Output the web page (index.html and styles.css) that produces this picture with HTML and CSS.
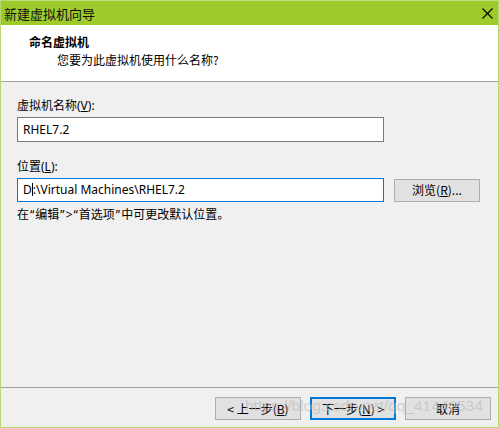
FILE: index.html
```html
<!DOCTYPE html>
<html>
<head>
<meta charset="utf-8">
<link rel="stylesheet" href="styles.css">
</head>
<body>
<div class="window">
  <div class="titlebar">
    <span class="title">新建虚拟机向导</span>
    <svg class="close" width="11" height="11" viewBox="0 0 11 11"><path d="M0.5 0.5 L10.5 10.5 M10.5 0.5 L0.5 10.5" stroke="#000" stroke-width="1.1" fill="none"/></svg>
  </div>
  <div class="header">
    <div class="h-title">命名虚拟机</div>
    <div class="h-sub">您要为此虚拟机使用什么名称?</div>
  </div>
  <div class="content">
    <div class="label">虚拟机名称(<u>V</u>):</div>
    <div class="row">
      <div class="input">RHEL7.2</div>
    </div>
    <div class="label label2">位置(<u>L</u>):</div>
    <div class="row">
      <div class="input focused">D<span class="caret"></span>:\Virtual Machines\RHEL7.2</div>
      <div class="btn browse">浏览(<u>R</u>)...</div>
    </div>
    <div class="note">在<span class="q">“</span>编辑<span class="q">”</span>&gt;<span class="q">“</span>首选项<span class="q">”</span>中可更改默认位置。</div>
  </div>
  <div class="footer">
    <div class="btn">&lt; 上一步(<u>B</u>)</div>
    <div class="btn primary">下一步(<u>N</u>) &gt;</div>
    <div class="btn">取消</div>
    <div class="watermark">https://blog.csdn.net/qq_41440534</div>
  </div>
</div>
</body>
</html>
```
FILE: styles.css
```css
* { box-sizing: border-box; }
html, body { margin: 0; padding: 0; }
body {
  width: 499px;
  height: 428px;
  font-family: "Noto Sans", "Noto Sans CJK SC", sans-serif;
  font-size: 12px;
  color: #000;
  overflow: hidden;
}
u { text-decoration: underline; text-underline-offset: 1px; }
.window {
  width: 499px;
  height: 428px;
  border: 1px solid #b7d873;
  border-top-color: #c0dd80;
  background: #f0f0f0;
  display: flex;
  flex-direction: column;
}
.titlebar {
  height: 24px;
  background: #9ecb2b;
  display: flex;
  align-items: center;
  justify-content: space-between;
  padding: 0 5px 0 3px;
  flex: none;
}
.title {
  font-family: "Noto Sans CJK SC", sans-serif;
  font-size: 13px;
  color: #111;
}
.header {
  height: 57px;
  background: #fff;
  border-bottom: 1px solid #a0a0a0;
  padding: 9px 0 0 28px;
  flex: none;
}
.h-title {
  font-family: "Noto Sans CJK SC", sans-serif;
  font-weight: bold;
  font-size: 12px;
  line-height: 16px;
}
.h-sub {
  font-family: "Noto Sans CJK SC", sans-serif;
  font-size: 12px;
  line-height: 16px;
  margin: 2px 0 0 28px;
}
.content {
  flex: 1;
  padding: 16px 0 0 16px;
}
.label {
  font-family: "Noto Sans", "Noto Sans CJK SC", sans-serif;
  line-height: 16px;
  height: 16px;
}
.label2 { margin-top: 17px; }
.row {
  display: flex;
  align-items: center;
  margin-top: 3px;
}
.input {
  width: 367px;
  height: 25px;
  background: #fff;
  border: 1px solid #7a7a7a;
  padding: 0 5px;
  line-height: 23px;
  font-family: "Noto Sans", sans-serif;
  font-size: 12px;
  white-space: nowrap;
}
.input.focused { border-color: #0078d7; height: 24px; line-height: 22px; }
.caret {
  display: inline-block;
  width: 1px;
  height: 13px;
  background: #000;
  vertical-align: -2px;
}
.btn {
  width: 86px;
  height: 23px;
  border: 1px solid #adadad;
  background: #e1e1e1;
  display: flex;
  align-items: center;
  justify-content: center;
  font-family: "Noto Sans CJK SC", sans-serif;
  font-size: 12px;
  line-height: 1;
}
.browse { margin-left: 10px; }
.note {
  font-family: "Noto Sans", "Noto Sans CJK SC", sans-serif;
  margin-top: 5px;
  line-height: 16px;
}
.q { padding: 0 1px; }
.footer {
  height: 40px;
  border-top: 1px solid #a0a0a0;
  display: flex;
  justify-content: flex-end;
  align-items: flex-start;
  gap: 9px;
  padding: 9px 7px 0 0;
  position: relative;
  flex: none;
}
.btn.primary { border: 2px solid #0078d7; }
.watermark {
  position: absolute;
  left: 244px;
  top: 9px;
  font-family: "Liberation Sans", sans-serif;
  font-size: 15.5px;
  color: rgba(185, 185, 185, 0.6);
  white-space: nowrap;
  pointer-events: none;
}
```
